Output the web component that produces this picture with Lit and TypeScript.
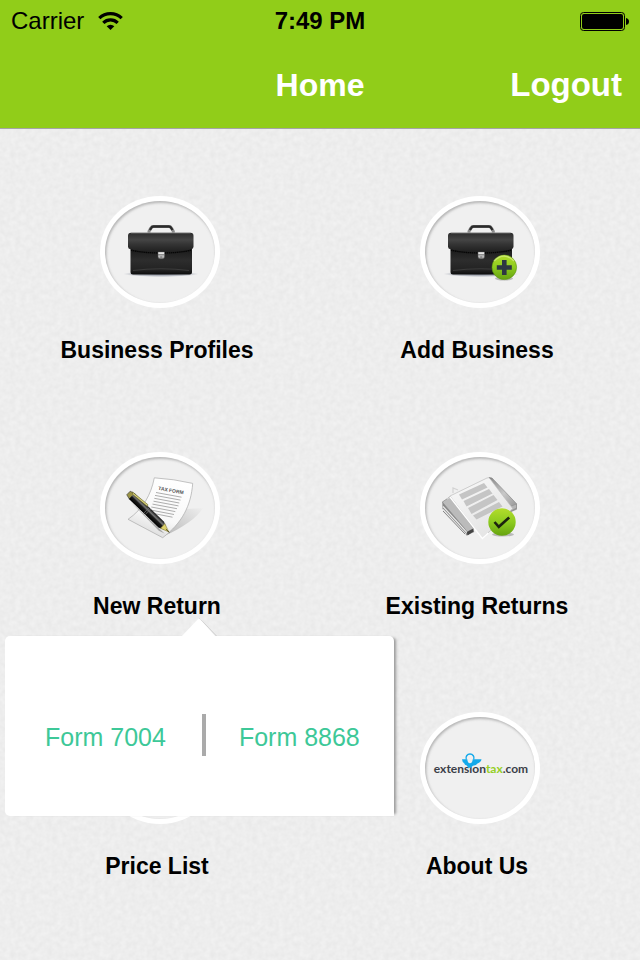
import { LitElement, html, css, svg, nothing } from "lit";
import { customElement, property } from "lit/decorators.js";

const briefcase = svg`
  <defs>
    <linearGradient id="flap" x1="0" y1="0" x2="0" y2="1">
      <stop offset="0" stop-color="#2c2c2c"/><stop offset=".35" stop-color="#454545"/>
      <stop offset=".6" stop-color="#333"/><stop offset="1" stop-color="#1d1d1d"/>
    </linearGradient>
    <linearGradient id="body" x1="0" y1="0" x2="0" y2="1">
      <stop offset="0" stop-color="#151515"/><stop offset=".5" stop-color="#2d2d2d"/>
      <stop offset=".85" stop-color="#222"/><stop offset="1" stop-color="#0c0c0c"/>
    </linearGradient>
    <linearGradient id="clasp" x1="0" y1="0" x2="0" y2="1">
      <stop offset="0" stop-color="#fafafa"/><stop offset="1" stop-color="#9a9a9a"/>
    </linearGradient>
    <radialGradient id="ground">
      <stop offset="0" stop-color="#6f7686" stop-opacity=".9"/>
      <stop offset=".75" stop-color="#8d93a1" stop-opacity=".5"/>
      <stop offset="1" stop-color="#b5b9c2" stop-opacity="0"/>
    </radialGradient>
  </defs>
  <ellipse cx="61" cy="78" rx="38" ry="3" fill="url(#ground)"/>
  <path d="M49 36.500v-1.200l1.800-3.200q.9-1.700 2.800-1.700h15.200q1.900 0 2.800 1.700l1.700 3.200v1.200" fill="none" stroke="#8c8c8c" stroke-width="3"/>
  <path d="M50 34l1.200-2q.8-1.500 2.400-1.500h15.200q1.600 0 2.400 1.500L72.400 34" fill="none" stroke="#2b2b2b" stroke-width="2.400"/>
  <path d="M30.500 50h61.500v26q0 2.500-2.500 2.500h-56.500q-2.500 0-2.500-2.500z" fill="url(#body)"/>
  <path d="M33 74.500q28-3.500 56 0" fill="none" stroke="#555" stroke-width=".7" opacity=".7"/>
  <path d="M31 36.700h59.500q3 0 3 3v11q0 2-2.500 2.600c-14 4.500-44 4.500-60.500 0q-2.500-.6-2.500-2.600v-11q0-3 3-3z" fill="url(#flap)"/>
  <path d="M31 37.400h59.500" stroke="#595959" stroke-width=".8"/>
  <path d="M31 54.200c17 3.800 44 3.800 60 0" fill="none" stroke="#050505" stroke-width="1.300" stroke-dasharray="1.500 .6"/>
  <path d="M58 56h6.500v4.800q0 2-2 2h-2.500q-2 0-2-2z" fill="url(#clasp)" stroke="#555" stroke-width=".5"/>
  <path d="M58 58.800h6.500M60.200 61h2" stroke="#555" stroke-width=".8"/>`;

const greenBall = svg`
  <defs>
    <linearGradient id="ball" x1="0" y1="0" x2="0" y2="1">
      <stop offset="0" stop-color="#b3dc2c"/><stop offset=".5" stop-color="#8dcb1f"/>
      <stop offset="1" stop-color="#66a310"/>
    </linearGradient>
  </defs>`;

const plusBadge = svg`
  ${greenBall}
  <ellipse cx="84" cy="82.500" rx="9" ry="2" fill="#777" opacity=".45"/>
  <circle cx="84.300" cy="71.300" r="12.300" fill="url(#ball)" stroke="#5d9411" stroke-width=".6"/>
  <path d="M74 65q10-10 20 0" fill="none" stroke="#d7f08a" stroke-width="1.400" opacity=".7"/>
  <path d="M84.300 64v15M76.800 71.500h15" stroke="#2e3742" stroke-width="4.600"/>`;

const taxForm = svg`
  <defs>
    <linearGradient id="sheet" x1=".7" y1="0" x2=".3" y2="1">
      <stop offset="0" stop-color="#fff"/><stop offset=".65" stop-color="#f8f8f8"/>
      <stop offset="1" stop-color="#d8d8d8"/>
    </linearGradient>
    <linearGradient id="cast" x1="0" y1="1" x2="1" y2="0">
      <stop offset="0" stop-color="#aaa"/><stop offset="1" stop-color="#eee"/>
    </linearGradient>
    <linearGradient id="barrel" x1="0" y1="0" x2="0" y2="1">
      <stop offset="0" stop-color="#111"/><stop offset=".35" stop-color="#777"/>
      <stop offset=".55" stop-color="#1a1a1a"/><stop offset="1" stop-color="#000"/>
    </linearGradient>
  </defs>
  <path d="M64 84C82 76 97 66 103 56L86 57z" fill="url(#cast)" opacity=".8"/>
  <path d="M54.300 25.800Q74 27 92.700 31.400C91 54 82 71 62.700 85.700L28 67.300C43 57 51 43 54.300 25.800z" fill="url(#sheet)" stroke="#a9a9a9" stroke-width=".7"/>
  <g transform="rotate(10 59 38)"><text class="form-title" x="58" y="38">TAX FORM</text></g>
  <path d="M56 40.500l25.500 4.700M55 43.400l25.500 4.700M54.300 46.300l25 4.700M53.500 49.200l25 4.700M52.500 52.100l24.500 4.600M51.300 55l24 4.600M50.500 58l23.500 4.500M52 61.200l20.500 4" stroke="#a4a4a4" stroke-width=".9"/>
  <g transform="translate(28.500 41) rotate(44)">
    <path d="M8 5l40 1 6-2z" fill="#666" opacity=".5"/>
    <path d="M0-2.500l5-1.300v7.600L0 2.500z" fill="#9b9446" stroke="#333" stroke-width=".6"/>
    <path d="M4.500-4h41l5 2.200v3.600l-5 2.200h-41z" fill="url(#barrel)"/>
    <path d="M25-4v8M27-4v8" stroke="#777" stroke-width=".7"/>
    <path d="M2-3.500l20-1.600 1 1.700-19 1.500z" fill="#d8d27a" stroke="#55521f" stroke-width=".5"/>
    <path d="M47.500-3.200L56 0l-8.500 3.200z" fill="#ddd16c" stroke="#7a7435" stroke-width=".5"/>
    <path d="M52 0h5" stroke="#443f18" stroke-width=".8"/>
  </g>`;

const papers = svg`
  ${greenBall}
  <defs>
    <linearGradient id="side" x1="0" y1="0" x2="1" y2="1">
      <stop offset="0" stop-color="#888"/><stop offset=".5" stop-color="#c8c8c8"/><stop offset="1" stop-color="#8e8e8e"/>
    </linearGradient>
    <linearGradient id="leaf" x1="0" y1="0" x2=".6" y2="1">
      <stop offset="0" stop-color="#fafafa"/><stop offset="1" stop-color="#e4e4e4"/>
    </linearGradient>
  </defs>
  <path d="M69 25.500l3 .5 24.500 25.700v5.600l-7 3z" fill="url(#side)" stroke="#7d7d7d" stroke-width=".6"/>
  <path d="M89 55l7.500-3v4l-5.500 3z" fill="#b5b5b5" stroke="#888" stroke-width=".5"/>
  <path d="M22.300 50l10-6 22 36-8 3.500L22.500 57z" fill="#888"/>
  <path d="M23 54.500l24 26M23 57.500l23 25" stroke="#e9e9e9" stroke-width="1.200"/>
  <path d="M23 59l22 23" stroke="#777" stroke-width=".9"/>
  <path d="M22.300 50l8-5.500 23.500 32-6.500 3.300z" fill="#bbb" stroke="#8c8c8c" stroke-width=".6"/>
  <path d="M47 80l6.500-3.500v3l-6 4z" fill="#444"/>
  <path d="M33 41v-5l5 2M27 47l38-19" fill="none" stroke="#d3d3d3" stroke-width="1.200"/>
  <path d="M30 44L67 26q2-.8 3 .8l22.700 29.700L62.300 86.500z" fill="url(#leaf)" stroke="#bdbdbd" stroke-width=".7"/>
  <path d="M30 45l32.300 41.500 6-5.500" fill="none" stroke="#fff" stroke-width="1.400"/>
  <g fill="#c5c5c5">
    <path d="M39 42.500L64 31l3.500 4.500-25.500 12z"/>
    <path d="M43.500 49L69 37l3.500 4.500-26 13z"/>
    <path d="M48 56L73.500 43l4 5-26 14z"/>
    <path d="M53 63.500L79 50l3.500 4.500-26 13z"/>
  </g>
  <ellipse cx="83" cy="82.500" rx="11" ry="2" fill="#777" opacity=".45"/>
  <circle cx="82" cy="70" r="13.700" fill="url(#ball)"/>
  <path d="M74.500 70l4.300 4.800L89.200 65.500" fill="none" stroke="#1c230f" stroke-width="2.600"/>`;

const company = svg`
  <text class="brand" x="61" y="61" text-anchor="middle">extension<tspan class="brand-tax">tax</tspan>.com</text>
  <path d="M42 47.300h5.300q.3 4 2.700 4t2.700-4h8.800q-.5 3-4 4.200-1 2-4.500 2.200l-2.300 2h-2.500l-1.400-2.200q-2.300-.5-2.600-2.200-2-1.200-2.200-4z" fill="#14a9ea"/>
  <path d="M46.300 47.500a4 4 0 1 1 7.400 0" fill="none" stroke="#14a9ea" stroke-width="1.400"/>`;

@customElement("menu-tile")
export class MenuTile extends LitElement {
  static styles = css`
    :host { display: flex; flex-direction: column; align-items: center; }
    .tile {
      display: flex; flex-direction: column; align-items: center; gap: 26px;
      width: 100%; padding: 0; border: 0; background: none; color: #000;
      font: bold 23px/32px "Liberation Sans", Arial, sans-serif; cursor: pointer;
    }
    .disc { display: block; width: 120px; height: 112px; }
    .label { padding-right: 6px; white-space: nowrap; }
    .form-title { font: bold 5px "Liberation Sans", Arial, sans-serif; fill: #555; }
    .brand { font: bold 12px Lato, sans-serif; fill: #3b3f48; }
    .brand-tax { fill: #95cf26; }
  `;
  @property() label = "";
  @property() icon = "";

  private art() {
    switch (this.icon) {
      case "profiles": return briefcase;
      case "add": return svg`${briefcase}${plusBadge}`;
      case "new": return taxForm;
      case "existing": return papers;
      case "about": return company;
      default: return nothing;
    }
  }

  render() {
    return html`
      <button class="tile" type="button">
        <svg class="disc" viewBox="0 0 120 112" aria-hidden="true">
          <defs>
            <filter id="soft" x="-10%" y="-10%" width="120%" height="120%"><feGaussianBlur stdDeviation="1.500"/></filter>
            <clipPath id="inside"><ellipse cx="60" cy="56" rx="55" ry="51"/></clipPath>
          </defs>
          <ellipse cx="60" cy="56" rx="60" ry="56" fill="#fff"/>
          <ellipse cx="60" cy="56" rx="55" ry="51" fill="#f0f0f0"/>
          <g clip-path="url(#inside)">
            <ellipse cx="61" cy="57.500" rx="56.500" ry="52.500" fill="none" stroke="#999" stroke-width="2.500" filter="url(#soft)"/>
          </g>
          ${this.art()}
        </svg>
        <span class="label">${this.label}</span>
      </button>
    `;
  }
}

@customElement("app-root")
export class AppRoot extends LitElement {
  static styles = css`
    :host {
      display: block; min-height: 100vh; color: #000;
      font-family: "Liberation Sans", Arial, sans-serif;
      background: #ededed url("data:image/svg+xml,%3Csvg xmlns='http://www.w3.org/2000/svg' width='200' height='200'%3E%3Cfilter id='n' x='0' y='0' width='100%25' height='100%25' color-interpolation-filters='sRGB'%3E%3CfeTurbulence type='fractalNoise' baseFrequency='.19' numOctaves='2' seed='4' stitchTiles='stitch'/%3E%3CfeColorMatrix values='.05 0 0 0 .905 .05 0 0 0 .905 .05 0 0 0 .905 0 0 0 0 1'/%3E%3C/filter%3E%3Crect width='200' height='200' filter='url(%23n)'/%3E%3C/svg%3E");
    }
    .top { background: #91cd19; border-bottom: 1px solid #a5a5a5; }
    .status {
      display: grid; grid-template-columns: 1fr auto 1fr; align-items: center;
      height: 42px; padding: 0 11px; font-size: 24px;
    }
    .carrier { display: flex; align-items: center; gap: 14px; }
    .time { font-weight: bold; }
    .battery { justify-self: end; }
    .nav {
      display: grid; grid-template-columns: 1fr auto 1fr; align-items: center;
      height: 86px; padding: 0 18px;
    }
    .title { grid-column: 2; margin: 0; color: #fff; font-size: 32px; font-weight: bold; }
    .logout {
      justify-self: end; padding: 0; border: 0; background: none; color: #fff;
      font: bold 33px "Liberation Sans", Arial, sans-serif; cursor: pointer;
    }
    .menu {
      display: grid; grid-template-columns: 1fr 1fr; grid-template-rows: 256px 260px auto;
      align-items: start; padding: 67px 0 48px;
    }
    .anchor { position: relative; }
    .popover {
      position: absolute; z-index: 1; top: 184px; left: 5px;
      display: flex; align-items: center; box-sizing: border-box;
      height: 180px; padding-top: 18px; background: #fff; border-radius: 5px 5px 0 5px;
      box-shadow: 4px 0 3px -2px #999;
    }
    .arrow { position: absolute; top: -18px; left: 176px; }
    .form {
      padding: 4px 36px 0 40px; color: #3dc898; font-size: 25px;
      text-decoration: none; white-space: nowrap;
    }
    .rule { width: 4px; height: 42px; background: #aaa; }
    .form:last-child { padding: 4px 34px 0 33px; }
  `;

  render() {
    return html`
      <header class="top">
        <div class="status">
          <span class="carrier">Carrier
            <svg width="25" height="19" viewBox="0 0 25 19" aria-label="Wi-Fi">
              <g fill="none" stroke="#000" stroke-width="3.200">
                <path d="M1.300 6.200a16 16 0 0 1 22.400 0"/>
                <path d="M5.300 10.800a10.200 10.200 0 0 1 14.400 0"/>
              </g>
              <path d="M8.700 14.200a5.400 5.400 0 0 1 7.600 0L12.500 18z"/>
            </svg>
          </span>
          <span class="time">7:49 PM</span>
          <svg class="battery" width="49" height="19" viewBox="0 0 49 19" aria-label="Battery full">
            <rect x=".5" y=".5" width="44" height="18" rx="3" fill="none" stroke="#000"/>
            <rect x="2" y="2" width="41" height="15" rx="2"/>
            <path d="M46 6q3 .5 3 3.500t-3 3.500z"/>
          </svg>
        </div>
        <nav class="nav">
          <h1 class="title">Home</h1>
          <button class="logout" type="button">Logout</button>
        </nav>
      </header>
      <main class="menu">
        <menu-tile label="Business Profiles" icon="profiles"></menu-tile>
        <menu-tile label="Add Business" icon="add"></menu-tile>
        <div class="anchor">
          <menu-tile label="New Return" icon="new"></menu-tile>
          <div class="popover">
            <svg class="arrow" width="36" height="19" viewBox="0 0 36 19" aria-hidden="true"><path d="M18 .6q.8 0 1.400.8L35.500 18" fill="none" stroke="#ccc"/><path d="M0 19L17 1q1-1 2 0L35 19z" fill="#fff"/></svg>
            <a class="form" href="#form-7004">Form 7004</a>
            <span class="rule"></span>
            <a class="form" href="#form-8868">Form 8868</a>
          </div>
        </div>
        <menu-tile label="Existing Returns" icon="existing"></menu-tile>
        <menu-tile label="Price List" icon="price"></menu-tile>
        <menu-tile label="About Us" icon="about"></menu-tile>
      </main>
    `;
  }
}
